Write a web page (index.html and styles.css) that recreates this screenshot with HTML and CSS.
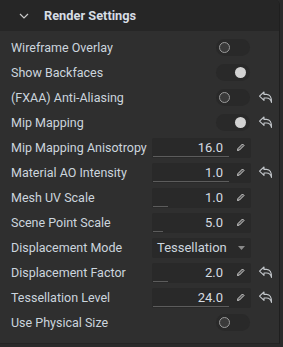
FILE: index.html
```html
<!DOCTYPE html>
<html>
<head>
<meta charset="utf-8">
<link rel="stylesheet" href="styles.css">
</head>
<body>
<div class="panel">
  <div class="header">
    <svg class="chev" width="10" height="6" viewBox="0 0 10 6"><path d="M1 1 L5 5 L9 1" fill="none" stroke="#c8c8c8" stroke-width="1.2"/></svg>
    <span class="title">Render Settings</span>
  </div>
  <div class="body">
    <div class="row"><span class="label">Wireframe Overlay</span><div class="ctrl"><div class="toggle"><span class="knob off"></span></div></div><div class="reset"></div></div>
    <div class="row"><span class="label">Show Backfaces</span><div class="ctrl"><div class="toggle on"><span class="knob"></span></div></div><div class="reset"></div></div>
    <div class="row"><span class="label">(FXAA) Anti-Aliasing</span><div class="ctrl"><div class="toggle"><span class="knob off"></span></div></div><div class="reset"><svg width="15" height="13" viewBox="0 0 15 13"><path d="M6 1 L1.5 5.2 L6 9.4 V7 H8.5 Q12.5 7 13.5 11.5 Q13.8 3.6 8.5 3.4 H6 Z" fill="none" stroke="#c4c8cc" stroke-width="1.1" stroke-linejoin="round"/></svg></div></div>
    <div class="row"><span class="label">Mip Mapping</span><div class="ctrl"><div class="toggle on"><span class="knob"></span></div></div><div class="reset"><svg width="15" height="13" viewBox="0 0 15 13"><path d="M6 1 L1.5 5.2 L6 9.4 V7 H8.5 Q12.5 7 13.5 11.5 Q13.8 3.6 8.5 3.4 H6 Z" fill="none" stroke="#c4c8cc" stroke-width="1.1" stroke-linejoin="round"/></svg></div></div>
    <div class="row"><span class="label">Mip Mapping Anisotropy</span><div class="ctrl"><div class="num"><span class="val">16.0</span><span class="bar" style="width:76px"></span><svg class="pen" width="9" height="9" viewBox="0 0 9 9"><path d="M1.5 7.5 L2 5.5 L6.5 1 L8 2.5 L3.5 7 Z" fill="#555" stroke="#cfcfcf" stroke-width="1"/></svg></div></div><div class="reset"></div></div>
    <div class="row"><span class="label">Material AO Intensity</span><div class="ctrl"><div class="num"><span class="val">1.0</span><span class="bar" style="width:76px"></span><svg class="pen" width="9" height="9" viewBox="0 0 9 9"><path d="M1.5 7.5 L2 5.5 L6.5 1 L8 2.5 L3.5 7 Z" fill="#555" stroke="#cfcfcf" stroke-width="1"/></svg></div></div><div class="reset"><svg width="15" height="13" viewBox="0 0 15 13"><path d="M6 1 L1.5 5.2 L6 9.4 V7 H8.5 Q12.5 7 13.5 11.5 Q13.8 3.6 8.5 3.4 H6 Z" fill="none" stroke="#c4c8cc" stroke-width="1.1" stroke-linejoin="round"/></svg></div></div>
    <div class="row"><span class="label">Mesh UV Scale</span><div class="ctrl"><div class="num"><span class="val">1.0</span><span class="bar" style="width:15px"></span><svg class="pen" width="9" height="9" viewBox="0 0 9 9"><path d="M1.5 7.5 L2 5.5 L6.5 1 L8 2.5 L3.5 7 Z" fill="#555" stroke="#cfcfcf" stroke-width="1"/></svg></div></div><div class="reset"></div></div>
    <div class="row"><span class="label">Scene Point Scale</span><div class="ctrl"><div class="num"><span class="val">5.0</span><span class="bar" style="width:10px"></span><svg class="pen" width="9" height="9" viewBox="0 0 9 9"><path d="M1.5 7.5 L2 5.5 L6.5 1 L8 2.5 L3.5 7 Z" fill="#555" stroke="#cfcfcf" stroke-width="1"/></svg></div></div><div class="reset"></div></div>
    <div class="row"><span class="label">Displacement Mode</span><div class="ctrl"><div class="select"><span class="sel-text">Tessellation</span><svg class="caret" width="7" height="4" viewBox="0 0 7 4"><path d="M0 0 H7 L3.5 4 Z" fill="#8a8a8a"/></svg></div></div><div class="reset"></div></div>
    <div class="row"><span class="label">Displacement Factor</span><div class="ctrl"><div class="num"><span class="val">2.0</span><span class="bar" style="width:15px"></span><svg class="pen" width="9" height="9" viewBox="0 0 9 9"><path d="M1.5 7.5 L2 5.5 L6.5 1 L8 2.5 L3.5 7 Z" fill="#555" stroke="#cfcfcf" stroke-width="1"/></svg></div></div><div class="reset"><svg width="15" height="13" viewBox="0 0 15 13"><path d="M6 1 L1.5 5.2 L6 9.4 V7 H8.5 Q12.5 7 13.5 11.5 Q13.8 3.6 8.5 3.4 H6 Z" fill="none" stroke="#c4c8cc" stroke-width="1.1" stroke-linejoin="round"/></svg></div></div>
    <div class="row"><span class="label">Tessellation Level</span><div class="ctrl"><div class="num"><span class="val">24.0</span><span class="bar" style="width:76px"></span><svg class="pen" width="9" height="9" viewBox="0 0 9 9"><path d="M1.5 7.5 L2 5.5 L6.5 1 L8 2.5 L3.5 7 Z" fill="#555" stroke="#cfcfcf" stroke-width="1"/></svg></div></div><div class="reset"><svg width="15" height="13" viewBox="0 0 15 13"><path d="M6 1 L1.5 5.2 L6 9.4 V7 H8.5 Q12.5 7 13.5 11.5 Q13.8 3.6 8.5 3.4 H6 Z" fill="none" stroke="#c4c8cc" stroke-width="1.1" stroke-linejoin="round"/></svg></div></div>
    <div class="row"><span class="label">Use Physical Size</span><div class="ctrl"><div class="toggle"><span class="knob off"></span></div></div><div class="reset"></div></div>
  </div>
</div>
</body>
</html>
```
FILE: styles.css
```css
html, body {
  margin: 0;
  padding: 0;
  background: #2a2a2a;
}
body {
  width: 283px;
  height: 347px;
  overflow: hidden;
  font-family: Roboto, "Liberation Sans", sans-serif;
}
.panel {
  width: 280px;
  height: 344px;
  background: #2f2f2f;
  border-right: 1px solid #1f1f1f;
  border-bottom: 1px solid #242424;
  border-top-right-radius: 5px;
  overflow: hidden;
  box-sizing: border-box;
  display: flex;
  flex-direction: column;
}
.header {
  height: 31px;
  flex: none;
  background: #262626;
  display: flex;
  align-items: center;
}
.chev {
  margin-left: 19px;
  margin-top: 1px;
}
.title {
  margin-left: 15px;
  font-size: 12.8px;
  font-weight: bold;
  color: #d6dde4;
}
.body {
  padding-top: 4px;
  margin-left: 3px;
  flex: 1;
  background: #2f2f2f;
}
.row {
  height: 25px;
  display: flex;
  align-items: center;
}
.label {
  flex: 1;
  padding-left: 8px;
  font-size: 12.5px;
  color: #ccd5de;
  white-space: nowrap;
}
.ctrl {
  width: 99px;
  height: 20px;
  display: flex;
  justify-content: flex-end;
  align-items: center;
}
.reset {
  width: 28px;
  display: flex;
  justify-content: center;
  align-items: center;
  height: 20px;
}
.toggle {
  width: 34px;
  height: 17px;
  border-radius: 9px;
  background: #292929;
  display: flex;
  align-items: center;
  padding: 0 3px 0 3px;
  box-sizing: border-box;
  margin-right: 1px;
}
.toggle.on {
  justify-content: flex-end;
  padding-right: 4px;
}
.knob {
  width: 11px;
  height: 11px;
  border-radius: 50%;
  background: #d2d2d2;
  box-sizing: border-box;
}
.knob.off {
  width: 11px;
  height: 11px;
  background: #3a3a3a;
  border: 1.5px solid #9a9a9a;
}
.num, .select {
  position: relative;
  width: 99px;
  height: 20px;
  background: #292929;
  border-radius: 2px;
  display: flex;
  align-items: center;
  box-sizing: border-box;
}
.val {
  width: 71px;
  text-align: right;
  font-size: 13px;
  color: #d6dce2;
}
.bar {
  position: absolute;
  left: 1px;
  bottom: 1px;
  height: 1px;
  background: #5c5c5c;
}
.pen {
  margin-left: 13px;
}
.sel-text {
  flex: 1;
  padding-left: 5px;
  font-size: 13px;
  color: #ccd5de;
}
.caret {
  margin-right: 6px;
}
```
